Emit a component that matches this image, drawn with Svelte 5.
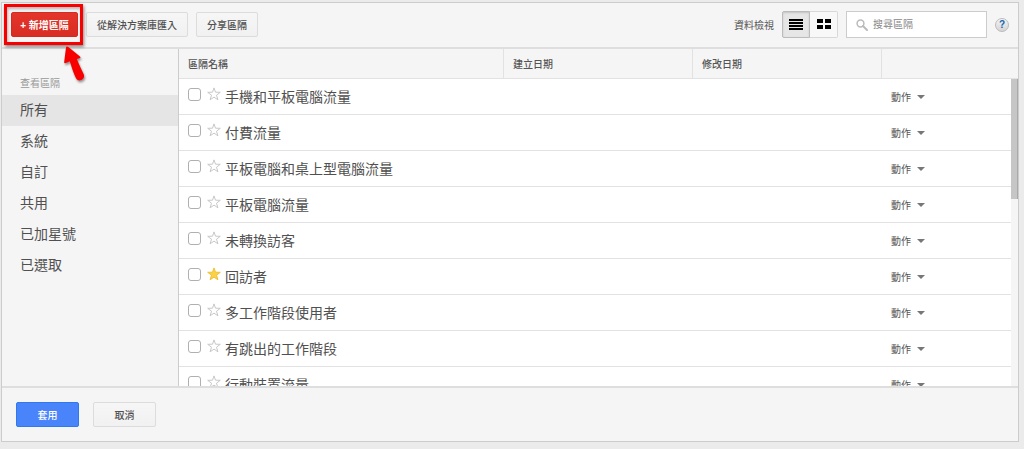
<script>
	let segments = $state([
		{ name: "手機和平板電腦流量", starred: false, checked: false },
		{ name: "付費流量", starred: false, checked: false },
		{ name: "平板電腦和桌上型電腦流量", starred: false, checked: false },
		{ name: "平板電腦流量", starred: false, checked: false },
		{ name: "未轉換訪客", starred: false, checked: false },
		{ name: "回訪者", starred: true, checked: false },
		{ name: "多工作階段使用者", starred: false, checked: false },
		{ name: "有跳出的工作階段", starred: false, checked: false },
		{ name: "行動裝置流量", starred: false, checked: false },
	]);

	const filters = [
		{ id: "all", text: "所有" },
		{ id: "system", text: "系統" },
		{ id: "custom", text: "自訂" },
		{ id: "shared", text: "共用" },
		{ id: "starred", text: "已加星號" },
		{ id: "selected", text: "已選取" },
	];

	let activeFilter = $state("all");
	let view = $state("list");
	let search = $state("");
</script>

<div class="page">
	<div class="panel">
		<header class="toolbar">
			<div class="callout">
				<button class="btn btn-create">+ 新增區隔</button>
				<span class="callout-box"></span>
				<svg class="callout-arrow" viewBox="0 0 28 40" aria-hidden="true">
					<path
						d="M7 2.500Q8 2.500 9 3.500L20 12.500Q21 14 19.500 14.300L16.800 15C19 20.500 21.500 25.500 23.800 30.500C25.500 35 19 39 16 34.200C13.500 29 11.500 23 9.800 17.200L5.300 19.200Q4 19.500 4.200 17.800L6 3.500Q6.200 2.600 7 2.500Z"
						fill="#f90000"
					/>
				</svg>
			</div>
			<button class="btn">從解決方案庫匯入</button>
			<button class="btn">分享區隔</button>

			<div class="toolbar-right">
				<span class="view-label" id="view-label">資料檢視</span>
				<div class="toggle" role="group" aria-labelledby="view-label">
					<button
						class:pressed={view === "list"}
						aria-label="清單"
						aria-pressed={view === "list"}
						onclick={() => (view = "list")}
					>
						<svg width="14" height="11" viewBox="0 0 14 11">
							<path d="M0 1h14M0 4h14M0 7h14M0 10h14" stroke="#000" stroke-width="2" />
						</svg>
					</button>
					<button
						class:pressed={view === "grid"}
						aria-label="格狀"
						aria-pressed={view === "grid"}
						onclick={() => (view = "grid")}
					>
						<svg width="14" height="11" viewBox="0 0 14 11">
							<path d="M0 0h6v4H0zM8 0h6v4H8zM0 6h6v4H0zM8 6h6v4H8z" />
						</svg>
					</button>
				</div>
				<label class="search">
					<svg width="12" height="12" viewBox="0 0 12 12" aria-hidden="true">
						<circle cx="4.500" cy="4.500" r="3.400" fill="none" stroke="#bbb" stroke-width="1.500" />
						<path d="M7 7l4 4" stroke="#bbb" stroke-width="2" stroke-linecap="round" />
					</svg>
					<input type="text" placeholder="搜尋區隔" aria-label="搜尋區隔" bind:value={search} />
				</label>
				<button class="help">?</button>
			</div>
		</header>

		<div class="content">
			<nav class="sidebar">
				<h2>查看區隔</h2>
				{#each filters as filter}
					<a
						href={"#" + filter.id}
						class:active={activeFilter === filter.id}
						onclick={() => (activeFilter = filter.id)}>{filter.text}</a
					>
				{/each}
			</nav>

			<div class="list">
				<div class="list-scroll">
					<table>
						<thead>
							<tr>
								<th class="col-name">區隔名稱</th>
								<th class="col-date">建立日期</th>
								<th class="col-date">修改日期</th>
								<th aria-label="動作"></th>
							</tr>
						</thead>
						<tbody>
							{#each segments as segment}
								<tr>
									<td colspan="3">
										<div class="segment">
											<input type="checkbox" aria-label={segment.name} bind:checked={segment.checked} />
											<button
												class="star"
												class:starred={segment.starred}
												aria-label="加星號"
												aria-pressed={segment.starred}
												onclick={() => (segment.starred = !segment.starred)}
											>
												<svg width="14" height="14" viewBox="0 0 14 14">
													<path
														d="M7 .9L8.500 5.200L13.300 5.300L9.500 8.200L10.900 12.800L7 10.100L3.100 12.800L4.500 8.200L.7 5.300L5.500 5.200Z"
													/>
												</svg>
											</button>
											<span class="segment-name">{segment.name}</span>
										</div>
									</td>
									<td>
										<button class="action">動作<span class="caret"></span></button>
									</td>
								</tr>
							{/each}
						</tbody>
					</table>
				</div>
				<div class="scrollbar"><div class="thumb"></div></div>
			</div>
		</div>

		<footer class="footer">
			<button class="btn btn-apply">套用</button>
			<button class="btn btn-cancel">取消</button>
		</footer>
	</div>
</div>

<style>
	:global(body) {
		background: #ebebeb;
	}

	.page {
		box-sizing: border-box;
		height: 100vh;
		padding: 2px 5px 7px 1px;
		display: flex;
		font-family: "Liberation Sans", "Noto Sans CJK TC", sans-serif;
		font-size: 10px;
		color: #555;
	}

	.page * {
		box-sizing: border-box;
	}

	button,
	input {
		font: inherit;
		color: inherit;
		margin: 0;
	}

	button {
		cursor: pointer;
	}

	.panel {
		flex: 1;
		min-width: 0;
		display: flex;
		flex-direction: column;
		border: 1px solid #ccc;
		background: #f5f5f5;
	}

	.toolbar {
		display: flex;
		align-items: center;
		gap: 8px;
		height: 46px;
		padding: 0 9px 1px;
		border-bottom: 2px solid #dedede;
	}

	.btn {
		height: 25px;
		padding: 0 10px;
		border: 1px solid #dcdcdc;
		border-radius: 2px;
		background: linear-gradient(#f6f6f6, #f1f1f1);
		font-weight: 500;
		color: #505050;
		white-space: nowrap;
	}

	.btn-create {
		width: 67px;
		padding: 0;
		border-color: #d42a20;
		background: linear-gradient(#e4352b, #d92c22);
		font-weight: bold;
		color: #fff;
	}

	.callout {
		position: relative;
		display: flex;
	}

	.callout-box {
		position: absolute;
		inset: -8px -5px -8px -7px;
		border: 3px solid #f90000;
		box-shadow: 1px 2px 3px rgba(0, 0, 0, 0.45), inset 1px 2px 3px rgba(0, 0, 0, 0.25);
		pointer-events: none;
	}

	.callout-arrow {
		position: absolute;
		z-index: 5;
		left: 49px;
		top: 32px;
		width: 28px;
		height: 40px;
		filter: drop-shadow(1px 2px 1px rgba(0, 0, 0, 0.4));
		pointer-events: none;
	}

	.toolbar-right {
		display: flex;
		align-items: center;
		gap: 8px;
		margin-left: auto;
	}

	.toggle {
		display: flex;
		height: 27px;
	}

	.toggle button {
		display: flex;
		align-items: center;
		justify-content: center;
		width: 28px;
		padding: 0;
		border: 1px solid #d8d8d8;
		border-left: 0;
		border-radius: 0 2px 2px 0;
		background: #f8f8f8;
	}

	.toggle button:first-child {
		border-left: 1px solid #bbb;
		border-radius: 2px 0 0 2px;
	}

	.toggle .pressed {
		border-color: #bbb;
		background: #e6e6e6;
		box-shadow: inset 0 1px 2px rgba(0, 0, 0, 0.15);
	}

	.search {
		display: flex;
		align-items: center;
		gap: 5px;
		width: 141px;
		height: 27px;
		padding: 0 9px;
		border: 1px solid #ccc;
		background: #fff;
	}

	.search svg {
		flex-shrink: 0;
	}

	.search input {
		width: 100%;
		min-width: 0;
		padding: 0;
		border: 0;
		outline: 0;
		background: none;
	}

	.search input::placeholder {
		color: #888;
	}

	.help {
		width: 14px;
		height: 14px;
		padding: 0;
		border: 1px solid #bbb;
		border-radius: 50%;
		background: linear-gradient(#f4f4f4, #d4d4d4);
		font-weight: bold;
		line-height: 12px;
		color: #1566b0;
	}

	.content {
		flex: 1;
		min-height: 0;
		display: flex;
	}

	.sidebar {
		flex: 0 0 177px;
		padding-top: 28px;
		border-right: 1px solid #ccc;
	}

	.sidebar h2 {
		margin: 0 0 4px;
		padding-left: 18px;
		font-size: 10px;
		font-weight: normal;
		line-height: 14px;
		color: #999;
	}

	.sidebar a {
		display: block;
		padding-left: 18px;
		font-size: 14px;
		line-height: 31px;
		color: #505050;
		text-decoration: none;
	}

	.sidebar .active {
		background: #e5e5e5;
	}

	.list {
		position: relative;
		flex: 1;
		min-width: 0;
		background: #fff;
	}

	.list-scroll {
		height: 100%;
		overflow-y: auto;
		scrollbar-width: none;
	}

	table {
		width: 100%;
		table-layout: fixed;
		border-collapse: separate;
		border-spacing: 0;
	}

	th {
		position: sticky;
		top: 0;
		z-index: 1;
		height: 30px;
		padding: 0 9px;
		border-right: 1px solid #e2e2e2;
		border-bottom: 1px solid #e2e2e2;
		background: #f5f5f5;
		font-weight: 500;
		text-align: left;
	}

	th:last-child {
		border-right: 0;
	}

	.col-name {
		width: 325px;
	}

	.col-date {
		width: 189px;
	}

	td {
		height: 36px;
		padding: 0 9px;
		border-bottom: 1px solid #e2e2e2;
	}

	.segment {
		display: flex;
		align-items: center;
	}

	.segment input {
		appearance: none;
		width: 13px;
		height: 13px;
		margin: 0 6px 4px 0;
		border: 1px solid #b0b0b0;
		border-radius: 3px;
		background: #fff;
	}

	.segment input:checked {
		background: #4d90fe;
	}

	.star {
		display: flex;
		padding: 0;
		margin: 0 4px 6px 0;
		border: 0;
		background: none;
	}

	.star path {
		fill: #fff;
		stroke: #c8c8c8;
	}

	.starred path {
		fill: #fcd245;
		stroke: #eec03a;
	}

	.segment-name {
		font-size: 14px;
		line-height: 20px;
		color: #505050;
	}

	.action {
		display: flex;
		align-items: center;
		gap: 6px;
		padding: 0;
		border: 0;
		background: none;
	}

	.caret {
		border: 4px solid transparent;
		border-top-color: #777;
		border-bottom: 0;
	}

	.scrollbar {
		position: absolute;
		top: 30px;
		right: 0;
		bottom: 0;
		width: 7px;
		background: #f5f5f5;
	}

	.thumb {
		height: 39%;
		border-right: 1px solid #aaa;
		background: #c6c6c6;
	}

	.footer {
		display: flex;
		align-items: center;
		gap: 14px;
		height: 55px;
		padding: 0 14px 1px;
		border-top: 2px solid #dedede;
	}

	.btn-cancel,
	.btn-apply {
		width: 63px;
	}

	.btn-apply {
		border-color: #3079ed;
		background: #4a84fb;
		color: #fff;
	}
</style>
